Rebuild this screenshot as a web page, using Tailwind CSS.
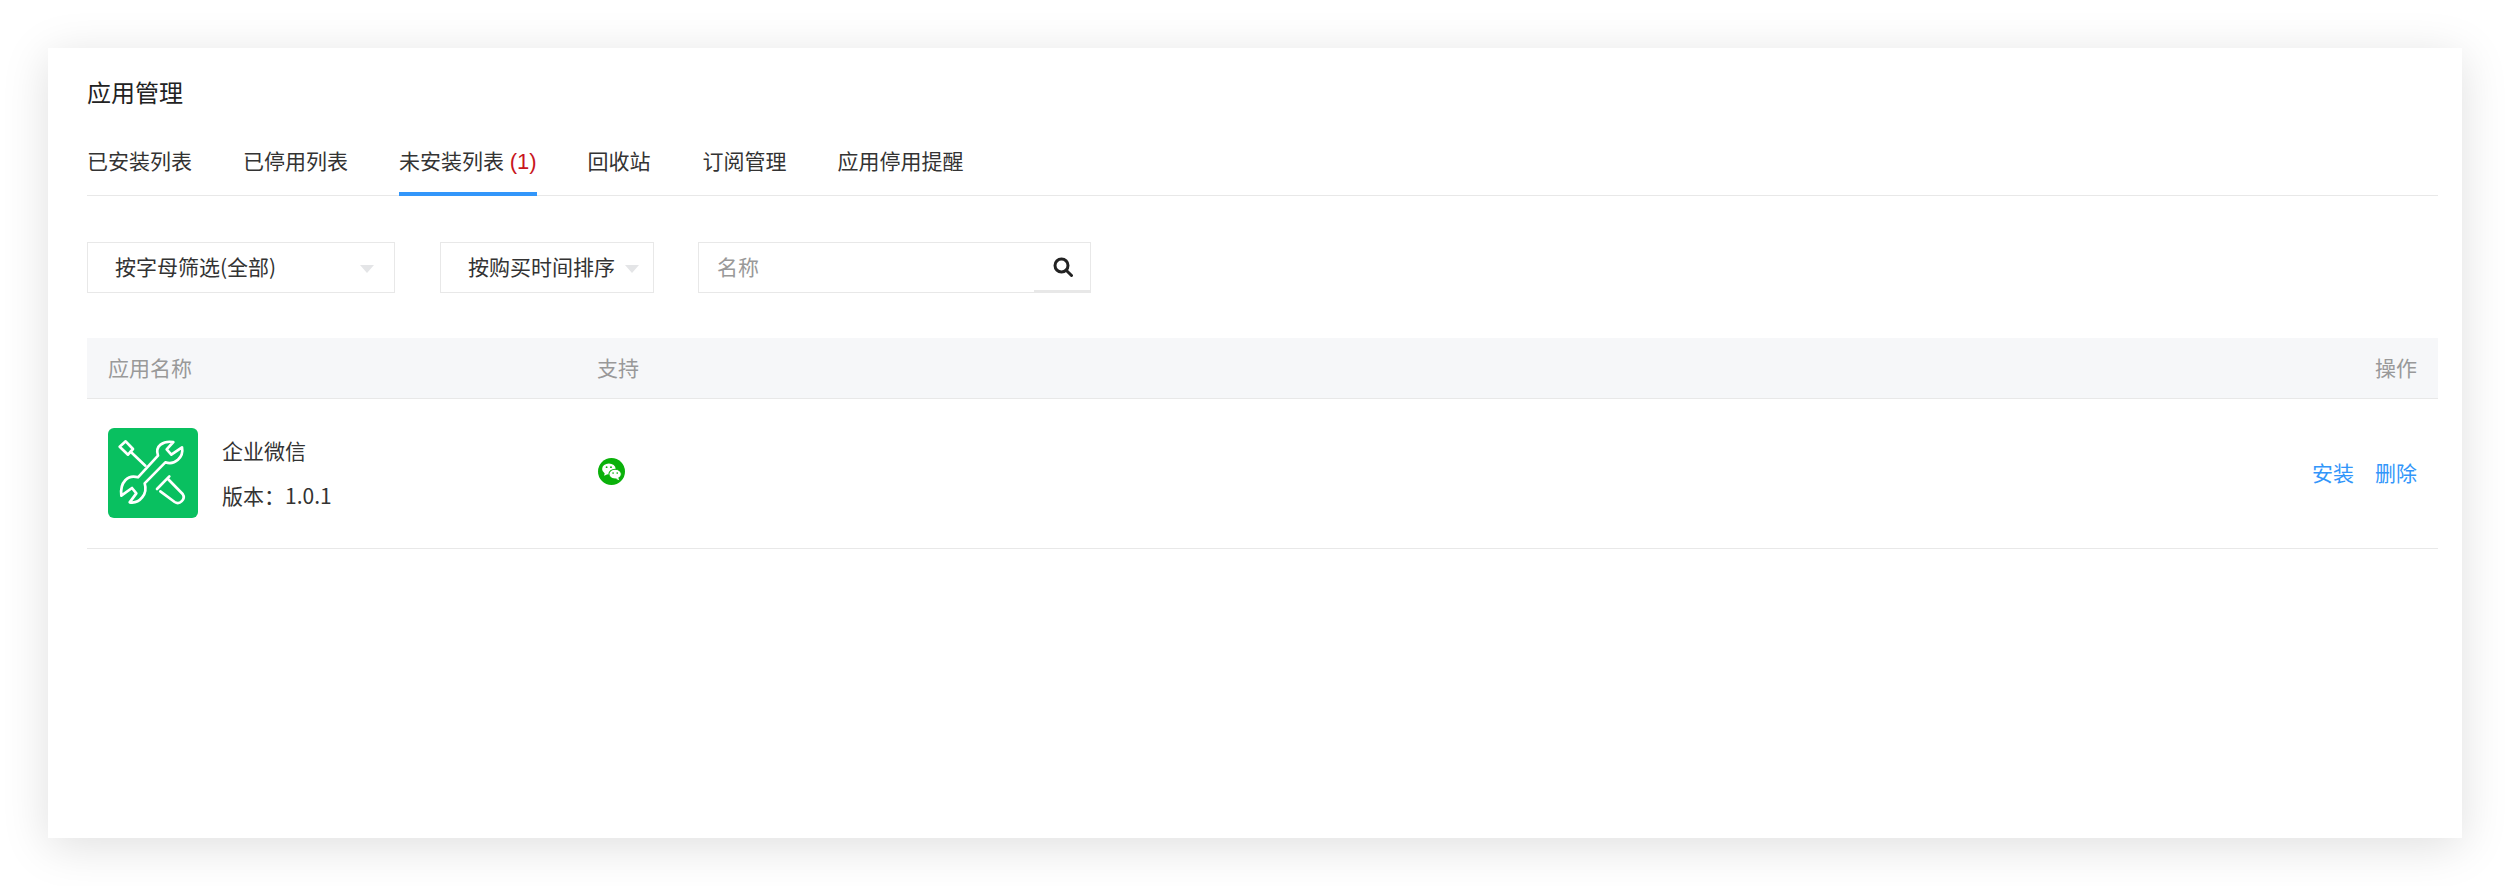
<!DOCTYPE html>
<html lang="zh">
<head>
<meta charset="utf-8">
<script src="https://cdn.jsdelivr.net/npm/@tailwindcss/browser@4"></script>
</head>
<body class="bg-white">
<div class="w-[2510px] h-[886px] pl-[48px] pt-[48px] overflow-hidden font-['Noto_Sans_CJK_SC','Noto_Sans',sans-serif] text-[21px] text-[#333]">
  <main class="w-[2414px] h-[790px] bg-white pl-[39px] pr-[24px] pt-[29px] shadow-[0_8px_44px_rgba(0,0,0,0.13)]">
    <h1 class="text-[24px] leading-[30px] font-normal text-[#222]">应用管理</h1>
    <nav class="mt-[40px] flex gap-[51px] border-b border-[#e8e8e8] h-[49px] leading-[27px]">
      <a class="h-[49px]">已安装列表</a>
      <a class="h-[49px]">已停用列表</a>
      <a class="h-[49px] border-b-4 border-[#3296fa]">未安装列表 <span class="text-[#c8161d] font-['Liberation_Sans',sans-serif] ml-[1px] text-[22px]">(1)</span></a>
      <a class="h-[49px]">回收站</a>
      <a class="h-[49px] ml-[1px]">订阅管理</a>
      <a class="h-[49px]">应用停用提醒</a>
    </nav>
    <div class="mt-[46px] flex h-[51px]">
      <div class="w-[308px] border border-[#e8e8e8] flex items-center pl-[27px] pr-[20px] justify-between">
        <span class="-mt-[2px]">按字母筛选(全部)</span>
        <span class="w-0 h-0 border-x-[7px] border-x-transparent border-t-[8px] border-t-[#e4e5e7] mt-[3px]"></span>
      </div>
      <div class="ml-[45px] w-[214px] border border-[#e8e8e8] flex items-center pl-[27px] pr-[20px] justify-between">
        <span class="whitespace-nowrap -mt-[2px]">按购买时间排序</span>
        <span class="w-0 h-0 border-x-[7px] border-x-transparent border-t-[8px] border-t-[#e4e5e7] mt-[3px] -mr-[6px]"></span>
      </div>
      <div class="ml-[44px] w-[393px] border border-[#e8e8e8] flex items-center justify-between pl-[18px]">
        <span class="text-[#999] -mt-[2px]">名称</span>
        <span class="w-[56px] h-full border-b-2 border-[#e8e8e8] flex items-center justify-center pl-[1px]">
          <svg width="20" height="20" viewBox="0 0 20 20" fill="none" stroke="#222" stroke-width="3"><circle cx="8.5" cy="8.5" r="6.5"/><path d="M13.2 13.2 L18.5 18.5" stroke-linecap="round"/></svg>
        </span>
      </div>
    </div>
    <div class="mt-[45px] h-[61px] bg-[#f6f7f9] border-b border-[#e8e8e8] flex items-center pl-[21px] pr-[21px] text-[#999]">
      <span class="w-[489px]">应用名称</span>
      <span class="flex-1">支持</span>
      <span>操作</span>
    </div>
    <div class="h-[150px] border-b border-[#e8e8e8] flex items-center pl-[21px] pr-[21px]">
      <div class="w-[489px] flex items-center">
        <div class="w-[90px] h-[90px] rounded-[6px] bg-[#09c060] -mt-[1px]">
          <svg width="90" height="90" viewBox="40 42 270 270" fill="none" stroke="#fff" stroke-width="8" stroke-linejoin="round" stroke-linecap="round">
            <path d="M236 84 L216 106 L230 122 L262 100 C268 130 240 155 212 145 L150 208 C160 240 135 270 105 265 L125 238 L112 222 L80 245 C75 205 100 180 130 190 L190 125 C180 95 205 80 236 84 Z"/>
            <path d="M75 98 L93 82 L115 105 L100 122 Z"/>
            <path d="M108 113 L152 155"/>
            <path d="M187 225 L224 187"/>
            <path d="M197 232 L240 264 C255 274 274 255 264 240 L220 195"/>
          </svg>
        </div>
        <div class="ml-[24px] flex flex-col gap-[15px] leading-[30px] -mt-[3px]">
          <span>企业微信</span>
          <span>版本：1.0.1</span>
        </div>
      </div>
      <div class="flex-1">
        <svg width="27" height="27" viewBox="0 0 26 26" class="ml-[1px] -mt-[5px]">
          <circle cx="13" cy="13" r="13" fill="#0ab10a"/>
          <ellipse cx="10.5" cy="10.5" rx="6.5" ry="5.3" fill="#fff"/>
          <path d="M6.5 14 L6 17 L9.5 15.5 Z" fill="#fff"/>
          <ellipse cx="16.5" cy="15.5" rx="6" ry="4.7" fill="#fff" stroke="#0ab10a" stroke-width="1"/>
          <path d="M19.5 19 L20.5 21.5 L17 20 Z" fill="#fff"/>
          <circle cx="8.3" cy="8.8" r="0.9" fill="#0ab10a"/>
          <circle cx="12.5" cy="8.8" r="0.9" fill="#0ab10a"/>
          <circle cx="14.5" cy="14.5" r="0.8" fill="#0ab10a"/>
          <circle cx="18.5" cy="14.5" r="0.8" fill="#0ab10a"/>
        </svg>
      </div>
      <div class="flex gap-[21px] text-[#3296fa] -mt-[2px]">
        <a>安装</a>
        <a>删除</a>
      </div>
    </div>
  </main>
</div>
</body>
</html>
